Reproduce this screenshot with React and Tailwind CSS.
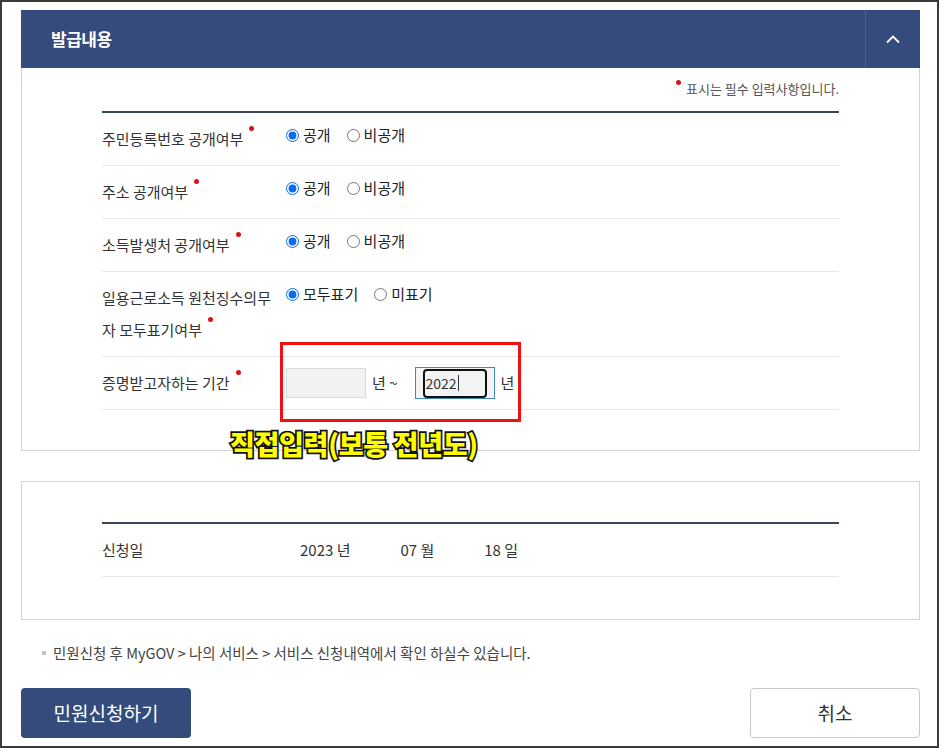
import React from 'react';

const font = { fontFamily: '"Noto Sans CJK KR", "Noto Sans", sans-serif' };

const Dot = () => (
  <span className="inline-block w-[5px] h-[5px] rounded-full bg-[#d7141a] ml-[6px] align-top mt-[3px]" />
);

const Radio = ({ name, label, checked }) => (
  <label className="flex items-center gap-[4px] mr-[16px] text-[15px] text-[#222]">
    <input type="radio" name={name} defaultChecked={checked} className="w-[13px] h-[13px] m-0 accent-[#0a6cf0]" />
    <span>{label}</span>
  </label>
);

const rows = [
  { label: ['주민등록번호 공개여부'], name: 'r1', a: '공개', b: '비공개' },
  { label: ['주소 공개여부'], name: 'r2', a: '공개', b: '비공개' },
  { label: ['소득발생처 공개여부'], name: 'r3', a: '공개', b: '비공개' },
  { label: ['일용근로소득 원천징수의무', '자 모두표기여부'], name: 'r4', a: '모두표기', b: '미표기' },
];

export default function App() {
  return (
    <div style={font} className="w-[939px] h-[748px] border-2 border-[#3a3a3a] bg-white pl-[19px] pt-[8px] overflow-hidden">
      {/* 발급내용 panel */}
      <div className="relative w-[899px]">
        <div className="h-[58px] bg-[#344b7b] flex items-center justify-between">
          <h2 className="pl-[30px] text-white text-[17px] font-bold tracking-[-0.5px]">발급내용</h2>
          <div className="h-full w-[55px] border-l border-[#4a6090] flex items-center justify-center">
            <svg width="16" height="10" viewBox="0 0 16 10" fill="none" stroke="white" strokeWidth="1.8">
              <path d="M2 8.5 L8 2.5 L14 8.5" />
            </svg>
          </div>
        </div>
        <div className="border border-t-0 border-[#d4d4d4] px-[80px] pt-[12px] pb-[40px]">
          <p className="text-right text-[13px] leading-[18px] text-[#555]">
            <span className="inline-block w-[5px] h-[5px] rounded-full bg-[#d7141a] mr-[5px] align-top" />
            표시는 필수 입력사항입니다.
          </p>
          <div className="mt-[13px] border-t-2 border-[#3b4558]">
            {rows.map((r) => (
              <div key={r.name} className="flex border-b border-[#e8e8e8] py-[10px]">
                <div className="w-[184px] text-[15px] leading-[32px] text-[#333] whitespace-nowrap">
                  {r.label.map((l, i) => (
                    <div key={i}>
                      {l}
                      {i === r.label.length - 1 && <Dot />}
                    </div>
                  ))}
                </div>
                <div className="flex items-center h-[32px] -mt-[4px]">
                  <Radio name={r.name} label={r.a} checked />
                  <Radio name={r.name} label={r.b} />
                </div>
              </div>
            ))}
            <div className="flex items-center border-b border-[#e8e8e8] py-[10px]">
              <div className="w-[184px] text-[15px] leading-[32px] text-[#333]">
                증명받고자하는 기간
                <Dot />
              </div>
              <div className="flex items-center text-[15px] text-[#333]">
                <div className="w-[80px] h-[30px] bg-[#f2f2f2] border border-[#dcdcdc]" />
                <span className="ml-[6px]">년 ~</span>
                <div className="ml-[17px] w-[80px] h-[32px] border border-[#3f88c5] bg-[#f3f3f3] flex items-center justify-center">
                  <div className="w-[64px] h-[29px] border-2 border-[#111] rounded-[4px] flex items-center pl-[1px] text-[14px] text-[#333]">
                    2022<span className="inline-block w-px h-[16px] bg-[#333] ml-[1px]" />
                  </div>
                </div>
                <span className="ml-[6px]">년</span>
              </div>
            </div>
          </div>
        </div>
        {/* annotation */}
        <div className="absolute left-[259px] top-[332px] w-[241px] h-[80px] border-[3px] border-[#ee1111]" />
        <div
          className="absolute left-[209px] top-[414px] text-[27px] font-black text-[#ffff00] tracking-[-0.3px] [-webkit-text-stroke:3.5px_#111] [paint-order:stroke_fill]"
        >
          직접입력(보통 전년도)
        </div>
      </div>

      {/* 신청일 panel */}
      <div className="mt-[30px] w-[899px] border border-[#d4d4d4] px-[80px] pt-[40px] pb-[42px]">
        <div className="border-t-2 border-[#3b4558]">
          <div className="flex items-center h-[53px] border-b border-[#e8e8e8] text-[15px] text-[#333]">
            <div className="w-[198px]">신청일</div>
            <div className="flex gap-[50px]">
              <span>2023 년</span>
              <span>07 월</span>
              <span>18 일</span>
            </div>
          </div>
        </div>
      </div>

      <p className="mt-[22px] ml-[21px] flex items-center text-[14.5px] text-[#444]">
        <span className="inline-block w-[4px] h-[4px] bg-[#c4c4c4] mr-[7px]" />
        민원신청 후 MyGOV &gt; 나의 서비스 &gt; 서비스 신청내역에서 확인 하실수 있습니다.
      </p>

      <div className="mt-[24px] w-[899px] flex justify-between">
        <button className="w-[170px] h-[50px] rounded-[4px] bg-[#344b7b] text-white text-[19px]">민원신청하기</button>
        <button className="w-[170px] h-[50px] rounded-[4px] bg-white border border-[#c8c8c8] text-[#333] text-[19px]">취소</button>
      </div>
    </div>
  );
}
